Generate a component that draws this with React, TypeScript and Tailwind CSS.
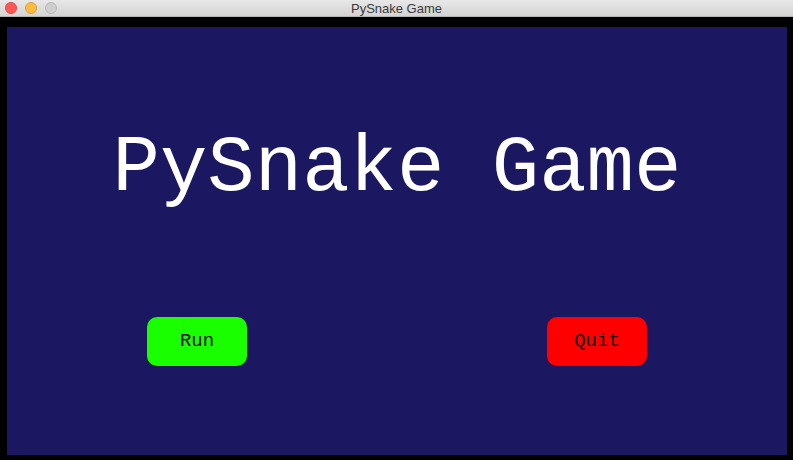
import React from "react";

export default function App() {
  return (
    <div className="w-[793px] h-[460px] flex flex-col bg-black overflow-hidden">
      {/* window title bar */}
      <div className="relative h-[17px] shrink-0 bg-gradient-to-b from-[#e8e8e8] to-[#d3d3d3] border-b border-[#b5b5b5] flex items-center justify-center">
        <div className="absolute left-[5px] top-[2px] flex gap-[8px]">
          <div className="w-[12px] h-[12px] rounded-full bg-[#fc5753] border border-[#df4744]" />
          <div className="w-[12px] h-[12px] rounded-full bg-[#fdbc40] border border-[#de9f34]" />
          <div className="w-[12px] h-[12px] rounded-full bg-[#cfcfcf] border border-[#b8b8b8]" />
        </div>
        <p className="font-['Helvetica','Liberation_Sans',sans-serif] text-[13px] leading-none text-[#3b3b3b]">PySnake Game</p>
      </div>

      <div className="flex-1 pt-[10px] pl-[7px] pr-[6px] pb-[5px]">
        <div className="h-full bg-[#1b1761] flex flex-col items-center">
          <p className="pt-[103px] font-['Liberation_Mono','Courier_New',monospace] text-[79px] leading-none text-white whitespace-pre">
            PySnake Game
          </p>
          <div className="mt-[108px] flex gap-[300px]">
            <button className="w-[100px] h-[49px] rounded-[10px] bg-[#1aff00] font-['Liberation_Mono','Courier_New',monospace] text-[19px] text-[#111]">
              Run
            </button>
            <button className="w-[100px] h-[49px] rounded-[10px] bg-[#ff0000] font-['Liberation_Mono','Courier_New',monospace] text-[19px] text-[#111]">
              Quit
            </button>
          </div>
        </div>
      </div>
    </div>
  );
}
